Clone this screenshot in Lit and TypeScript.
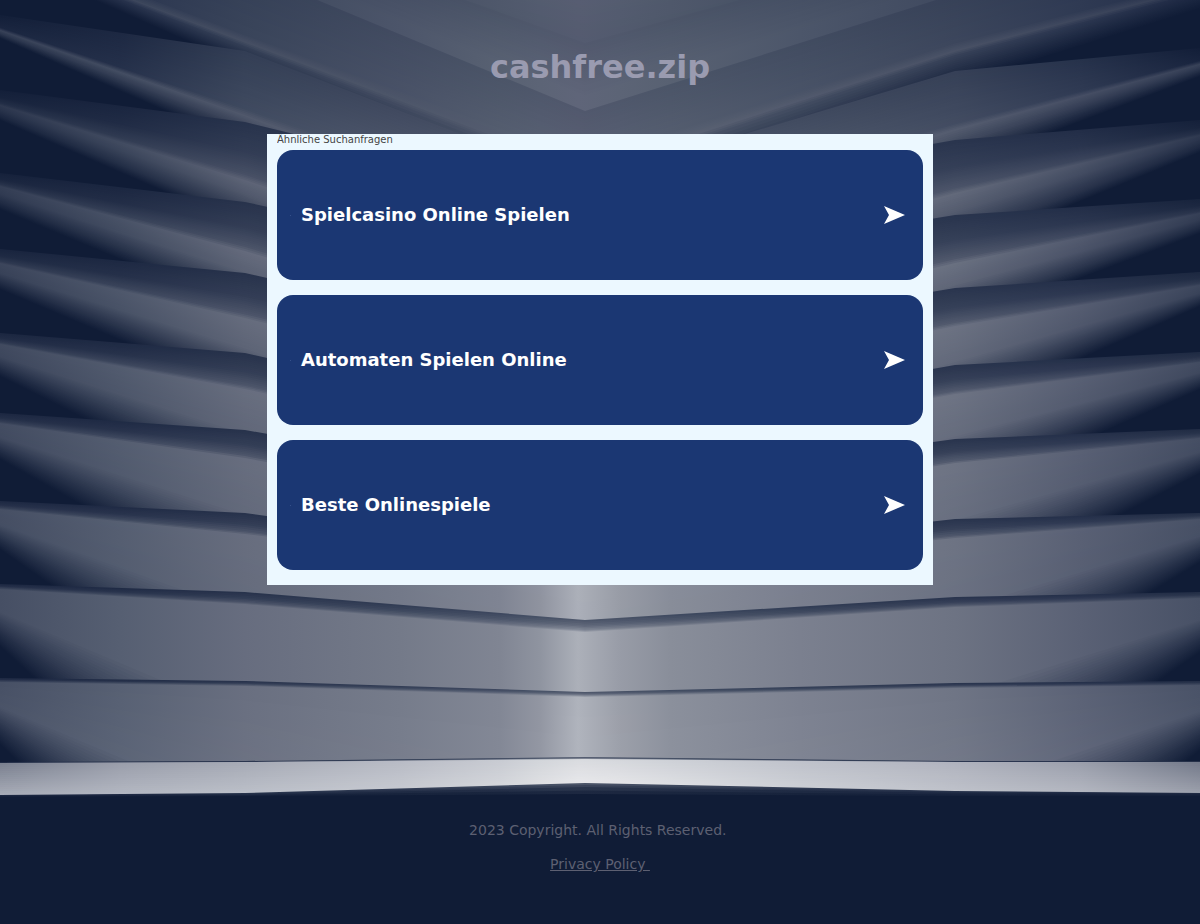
import { LitElement, html, svg, css } from "lit";
import { customElement, property } from "lit/decorators.js";

type RGB = [number, number, number];
/** Heights of a curve at the five anchor columns of the scene. */
type Curve = [number, number, number, number, number];

const COLUMNS = [0, 245, 585, 955, 1200];
const STOPS = [0, 120, 245, 400, 500, 540, 578, 620, 670, 800, 955, 1080, 1200];
const NIGHT: RGB = [16, 28, 54];

const mix = (a: number, b: number, t: number) => a + (b - a) * t;
const mixColor = (a: RGB, b: RGB, t: number): RGB => [
  mix(a[0], b[0], t),
  mix(a[1], b[1], t),
  mix(a[2], b[2], t),
];
const parse = (hex: string): RGB => [
  parseInt(hex.slice(0, 2), 16),
  parseInt(hex.slice(2, 4), 16),
  parseInt(hex.slice(4, 6), 16),
];
const profile = (text: string) => text.split(" ").map(parse);

/* Surface colours from the left edge to the right edge. */
const LIT = profile("475065 576073 696f80 767c8b 828795 9296a2 afb3bc 9b9fa9 8b909c 7d8291 6f7585 5b6276 495267");
const HAZE = profile("26314b 2b3650 3a455b 4a5368 555e70 596174 5c6276 596174 555e70 4a5468 3d475d 303b54 222d48");
const SHADE = profile("202b45 232e48 2c3750 38435a 465066 505a6e 5a6275 525b6f 495368 38435a 2e3952 29344e 263149");
const NONE = STOPS.map((): RGB => NIGHT);

/* How much of the surface survives towards the unlit sides, for the upper slats. */
const SIDES = STOPS.map((x) => Math.min(1, x / 245, (1200 - x) / 150));

interface Key {
  y: Curve;
  c: RGB[];
}

const scale = (p: RGB[], k: number) => p.map((c) => mixColor(NIGHT, c, k));
const blend = (a: RGB[], b: RGB[], t: number) => a.map((c, i) => mixColor(c, b[i], t));
const fade = (p: RGB[], keep: number) => p.map((c, i) => mixColor(NIGHT, c, mix(keep, 1, SIDES[i])));
const between = (a: Curve, b: Curve, t: number) => a.map((y, i) => mix(y, b[i], t)) as Curve;
const lower = (a: Curve, by: number) => a.map((y) => y + by) as Curve;

/** A slat: its front edge, the bright fold, and where the light has died away. */
function slat(
  edge: Curve,
  fold: Curve,
  dark: Curve,
  light: number,
  keep = 1,
  hold = 0.9,
  steep = 0.4
): Key[] {
  const lit = fade(scale(LIT, light), mix(keep, 1, 0.5));
  const shade = fade(SHADE, keep);
  return [
    { y: edge, c: scale(shade, 0.85) },
    { y: between(edge, fold, 0.5), c: blend(shade, lit, 0.12) },
    { y: between(edge, fold, 0.9), c: blend(shade, lit, 0.55) },
    { y: lower(fold, 1), c: lit },
    { y: between(fold, dark, steep), c: scale(lit, hold) },
    { y: between(fold, dark, 0.75), c: scale(lit, 0.38) },
    { y: dark, c: NONE },
  ];
}

const SCENE: Key[][] = [
  [
    { y: [-170, -90, -20, -90, -170], c: scale(HAZE, 0.95) },
    { y: [-130, -60, 38, -50, -120], c: scale(HAZE, 0.9) },
  ],
  [
    { y: [-166, -79, 43, -60, -128], c: scale(HAZE, 0.87) },
    { y: [-132, -40, 95, -20, -90], c: scale(HAZE, 1.04) },
  ],
  [
    { y: [-132, -30, 111, -6, -84], c: scale(HAZE, 0.86) },
    { y: [-60, 34, 160, 42, -20], c: scale(HAZE, 0.98) },
    { y: [-50, 41, 168, 50, -13], c: scale(LIT, 0.6) },
    { y: [-47, 46, 175, 55, -8], c: scale(HAZE, 0.84) },
    { y: [-42, 66, 240, 84, 8], c: NONE },
  ],
  [
    { y: [15, 51, 182, 71, 48], c: fade(scale(HAZE, 0.84), 0.15) },
    { y: [27, 108, 225, 123, 60], c: fade(scale(HAZE, 1.12), 0.4) },
    { y: [30, 115, 236, 129, 64], c: scale(LIT, 0.72) },
    { y: [33, 125, 320, 143, 68], c: scale(LIT, 0.5) },
    { y: [38, 145, 420, 168, 76], c: NONE },
  ],
  slat([90, 122, 205, 140, 120], [104, 179, 290, 192, 134], [120, 226, 420, 252, 152], 0.86, 0.25, 0.84, 0.3),
  slat([173, 202, 275, 215, 199], [185, 250, 350, 262, 212], [209, 310, 480, 324, 233], 0.94, 0.4, 0.88, 0.35),
  slat([249, 273, 350, 288, 272], [262, 317, 400, 325, 284], [289, 392, 560, 413, 306], 0.96, 0.65, 0.9, 0.4),
  slat([333, 353, 430, 365, 352], [343, 388, 460, 393, 361], [376, 497, 640, 496, 389], 0.98, 0.8, 0.92),
  slat([413, 430, 490, 439, 429], [422, 457, 520, 462, 437], [459, 595, 900, 600, 473], 0.98, 0.9, 0.95),
  slat([501, 513, 560, 519, 513], [508, 533, 575, 537, 518], [549, 720, 1100, 710, 562], 0.98, 1, 0.97),
  slat([584, 592, 620, 597, 592], [588, 603, 631, 606, 597], [646, 870, 1300, 820, 652], 0.98, 1, 1),
  slat([678, 681, 692, 683, 681], [681, 685, 696, 687, 684], [744, 980, 1500, 940, 750], 1, 1, 1.06),
  [
    { y: [762, 761, 757, 761, 761], c: scale(SHADE, 0.9) },
    { y: [763, 762, 758, 762, 762], c: scale(SHADE, 1.1) },
    {
      y: [763, 762, 759, 762, 762],
      c: profile("7b8190 9a9eab a7abb6 b8bbc5 c8cbd2 d2d5da d9dbdf d5d7dc ced1d7 bfc2cb b0b3be 9b9fac 747a8a"),
    },
    {
      y: [795, 793, 783, 791, 793],
      c: profile("a9adb8 b4b8c2 bcc0c9 c6c9d0 d4d6db dfe0e3 e8e8eb e5e5e8 dedfe3 cccfd5 bfc2ca b4b7c1 9da1ad"),
    },
  ],
  [
    { y: [795, 793, 783, 791, 793], c: scale(SHADE, 0.8) },
    { y: [796, 795, 787, 793, 794], c: scale(SHADE, 0.35) },
    { y: [797, 796, 794, 796, 796], c: NONE },
  ],
];

interface Band {
  y: Curve;
  c: RGB[];
}

/** Splits the space between key curves into thin bands, painted top to bottom. */
function bands(): Band[] {
  const out: Band[] = [];
  for (const keys of SCENE) {
    out.push(keys[0]);
    for (let i = 1; i < keys.length; i++) {
      const a = keys[i - 1];
      const b = keys[i];
      const span = Math.max(...[0, 1, 3, 4].map((n) => Math.abs(b.y[n] - a.y[n])));
      const steps = Math.max(2, Math.min(16, Math.ceil(span / 2)));
      for (let s = 1; s <= steps; s++) {
        const t = s / steps;
        out.push({ y: between(a.y, b.y, t), c: blend(a.c, b.c, t) });
      }
    }
  }
  return out;
}

const BANDS = bands();
const rgb = (c: RGB) => `rgb(${c.map((v) => Math.round(Math.min(255, v))).join(",")})`;
const outline = (y: Curve) =>
  "M" + COLUMNS.map((x, i) => `${x} ${y[i].toFixed(1)}`).join("L") + "V924H0Z";

@customElement("slat-backdrop")
export class SlatBackdrop extends LitElement {
  static styles = css`
    :host {
      display: block;
      overflow: hidden;
      background: #101c36;
    }
    .scene {
      display: block;
      width: 100%;
      height: 100%;
    }
  `;

  render() {
    return html`
      <svg class="scene" viewBox="0 0 1200 924" preserveAspectRatio="xMidYMid slice" aria-hidden="true">
        <defs>
          ${BANDS.map(
            (b, i) => svg`<linearGradient id=${"g" + i} gradientUnits="userSpaceOnUse" x1="0" y1="0" x2="1200" y2="0">
              ${b.c.map((c, n) => svg`<stop offset=${STOPS[n] / 1200} stop-color=${rgb(c)}></stop>`)}
            </linearGradient>`
          )}
        </defs>
        ${BANDS.map((b, i) => svg`<path d=${outline(b.y)} fill=${`url(#g${i})`}></path>`)}
      </svg>
    `;
  }
}

@customElement("search-card")
export class SearchCard extends LitElement {
  @property() label = "";

  static styles = css`
    :host {
      display: block;
    }
    .card {
      display: flex;
      align-items: center;
      gap: 10px;
      box-sizing: border-box;
      min-height: 130px;
      padding: 0 18px 0 13px;
      border-radius: 16px;
      background: #1b3773;
      color: #fff;
      font-size: 18px;
      font-weight: 700;
      line-height: 24px;
      text-decoration: none;
    }
    .dot {
      flex: none;
      width: 1px;
      height: 1px;
      background: #35508a;
    }
    .label {
      flex: 1;
    }
    .arrow {
      flex: none;
      width: 22px;
      height: 20px;
      fill: #fff;
    }
  `;

  render() {
    return html`
      <a class="card" href="#">
        <span class="dot"></span>
        <span class="label">${this.label}</span>
        <svg class="arrow" viewBox="0 0 22 20" aria-hidden="true">
          <path d="M1 1 22 10 1 19 6 10Z"></path>
        </svg>
      </a>
    `;
  }
}

@customElement("app-root")
export class AppRoot extends LitElement {
  static styles = css`
    :host {
      display: grid;
      min-height: 100vh;
      font-family: "DejaVu Sans", Verdana, sans-serif;
    }
    .backdrop,
    .page {
      grid-area: 1 / 1;
      min-width: 0;
    }
    .backdrop {
      contain: size;
    }
    .page {
      z-index: 1;
      display: flex;
      flex-direction: column;
      align-items: center;
    }
    .title {
      margin: 0;
      padding: 48px 0;
      color: #9a9bb0;
      font-size: 32px;
      line-height: 38px;
    }
    .panel {
      box-sizing: border-box;
      width: 100%;
      max-width: 666px;
      padding: 0 10px 15px;
      background: #ecf8ff;
    }
    .heading {
      margin: 0 0 4px;
      overflow: hidden;
      color: #444;
      font-size: 10px;
      font-weight: 400;
      line-height: 12px;
    }
    .list {
      display: grid;
      gap: 15px;
      margin: 0;
      padding: 0;
      list-style: none;
    }
    .footer {
      margin-top: auto;
      padding-bottom: 50px;
      color: #5d6072;
      font-size: 14px;
      line-height: 20px;
      text-align: center;
      white-space: pre;
    }
    .copyright {
      margin: 0 0 14px;
    }
    .privacy {
      color: inherit;
    }
  `;

  private searches = ["Spielcasino Online Spielen", "Automaten Spielen Online", "Beste Onlinespiele"];

  render() {
    return html`
      <slat-backdrop class="backdrop"></slat-backdrop>
      <div class="page">
        <h1 class="title">cashfree.zip</h1>
        <main class="panel">
          <h2 class="heading">Ähnliche Suchanfragen</h2>
          <ul class="list">
            ${this.searches.map((s) => html`<li><search-card .label=${s}></search-card></li>`)}
          </ul>
        </main>
        <footer class="footer"><p class="copyright">2023 Copyright. All Rights Reserved.&nbsp;</p><a class="privacy" href="#">Privacy Policy&nbsp;</a></footer>
      </div>
    `;
  }
}
